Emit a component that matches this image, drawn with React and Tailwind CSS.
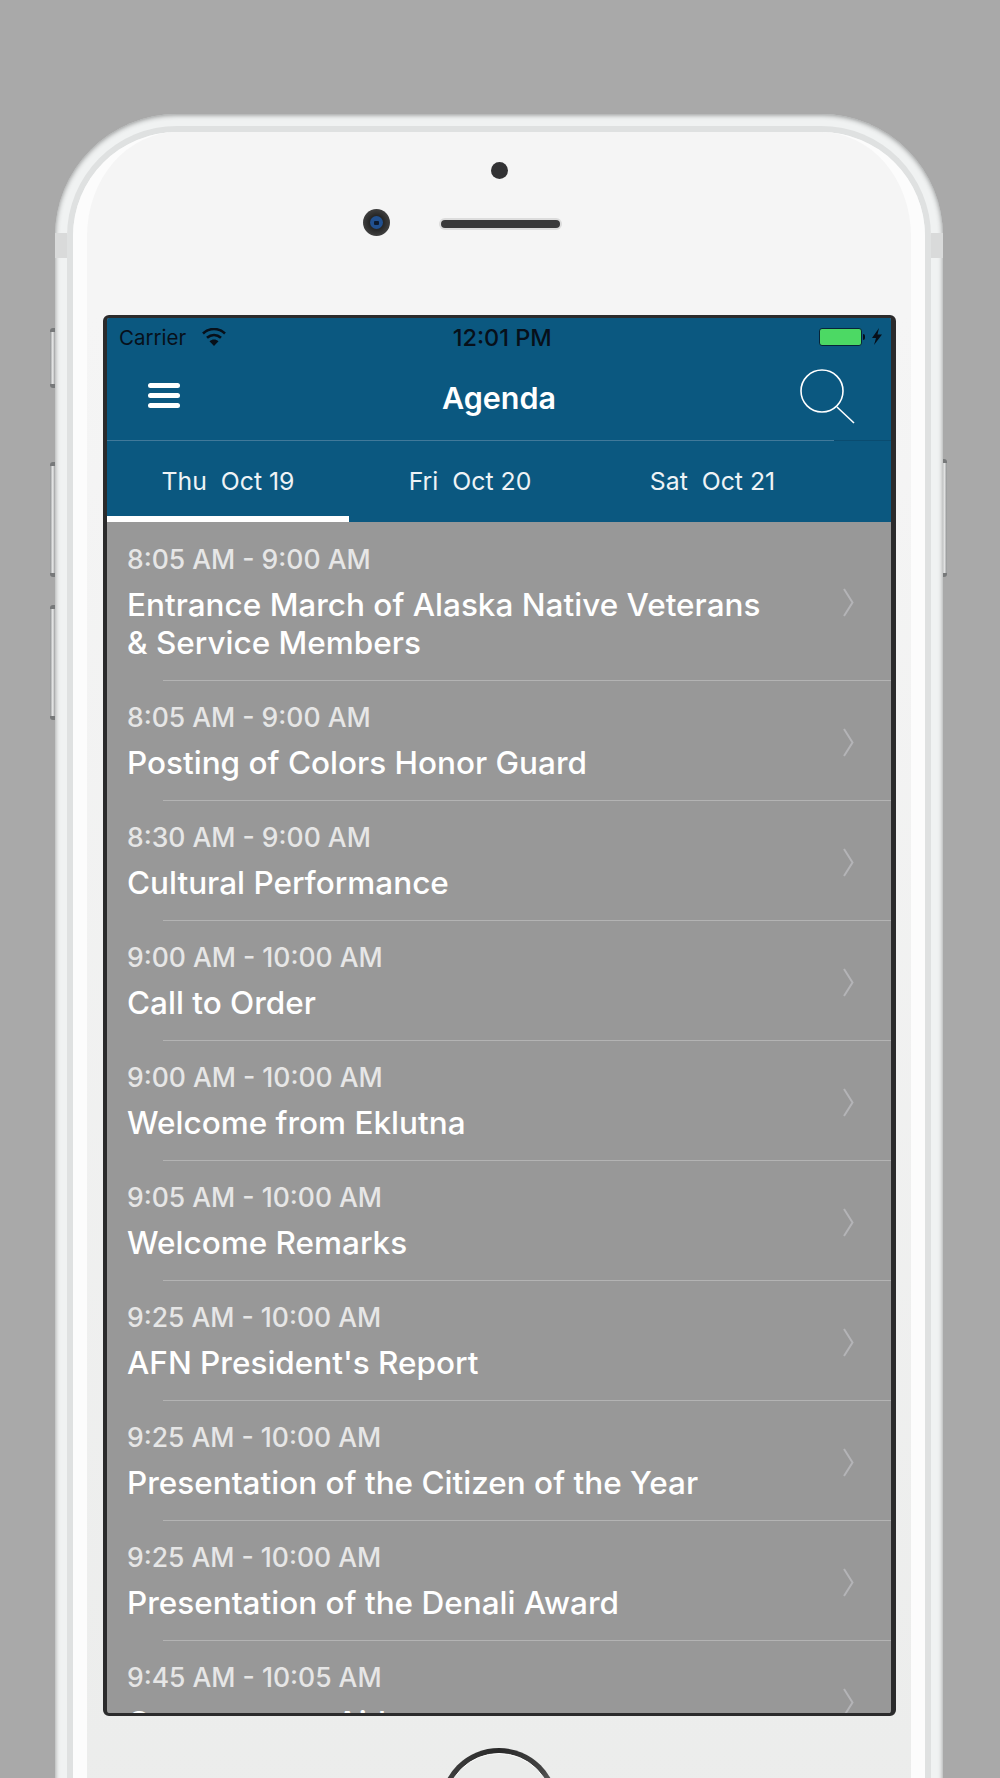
const rows = [
  { time: "8:05 AM - 9:00 AM", title: "Entrance March of Alaska Native Veterans & Service Members", tall: true },
  { time: "8:05 AM - 9:00 AM", title: "Posting of Colors Honor Guard" },
  { time: "8:30 AM - 9:00 AM", title: "Cultural Performance" },
  { time: "9:00 AM - 10:00 AM", title: "Call to Order" },
  { time: "9:00 AM - 10:00 AM", title: "Welcome from Eklutna" },
  { time: "9:05 AM - 10:00 AM", title: "Welcome Remarks" },
  { time: "9:25 AM - 10:00 AM", title: "AFN President's Report" },
  { time: "9:25 AM - 10:00 AM", title: "Presentation of the Citizen of the Year" },
  { time: "9:25 AM - 10:00 AM", title: "Presentation of the Denali Award" },
  { time: "9:45 AM - 10:05 AM", title: "Comments to Aid" },
];

function SideButton({ className }) {
  return (
    <div className={`absolute w-[5px] rounded-l-[3px] border-y-4 border-[#77797a] bg-[linear-gradient(90deg,#8d8f90,#e9eaea_55%,#9c9d9e)] ${className}`} />
  );
}

function Row({ item }) {
  return (
    <div className={`flex flex-col ${item.tall ? "h-[159px]" : "h-[120px]"}`}>
      <div className="flex flex-1 items-center">
        <div className="w-[670px] pt-[3px] pl-5">
          <div className="text-[26.5px] leading-[30px] font-medium text-[#e6e6e6]">{item.time}</div>
          <div className="mt-[12px] text-[31.5px] leading-[38px] font-medium text-white">{item.title}</div>
        </div>
        <svg className="mt-[3px] ml-[66px] h-[29px] w-[11px]" viewBox="0 0 11 29" fill="none" stroke="#b4b4b7" strokeWidth="2">
          <path d="M1 1 9.500 14.500 1 28" />
        </svg>
      </div>
      <div className="ml-14 h-px shrink-0 bg-[#b3b3b3]" />
    </div>
  );
}

export default function App() {
  return (
    <div className="h-[1778px] w-[1000px] overflow-hidden bg-[#a9a9a9] pt-[114px] font-['Inter','Liberation_Sans',sans-serif]">
      <div className="relative ml-[55px] w-[888px]">
        <SideButton className="left-[-5px] top-[214px] h-[60px]" />
        <SideButton className="left-[-5px] top-[348px] h-[115px]" />
        <SideButton className="left-[-5px] top-[491px] h-[115px]" />
        <SideButton className="right-[-4px] top-[345px] h-[118px] rotate-180" />

        {/* metal edge */}
        <div className="relative h-[1800px] rounded-t-[122px] bg-[#f0f2f2] px-[12px] pt-[12px] shadow-[inset_0_1px_5px_#8f9191]">
          <div className="absolute left-0 top-[119px] h-[25px] w-[12px] bg-[#d9dada]" />
          <div className="absolute right-0 top-[119px] h-[25px] w-[12px] bg-[#d9dada]" />
          <div className="h-full rounded-t-[110px] border-x-[6px] border-t-[6px] border-[#dfe1e1]">
            <div className="h-full rounded-t-[104px] border-x-[14px] border-t-0 border-[#fcfcfc] bg-[linear-gradient(180deg,#f5f5f5,#f5f5f5_180px,#ebeceb)] px-[16px]">
              <div className="flex justify-center pt-[30px]">
                <div className="h-[17px] w-[17px] rounded-full bg-[#323234]" />
              </div>
              <div className="mt-[30px] flex items-center pl-[260px]">
                <div className="flex h-[27px] w-[27px] items-center justify-center rounded-full bg-[radial-gradient(circle,#222_30%,#555)]">
                  <div className="flex h-[13px] w-[13px] items-center justify-center rounded-full bg-[#21508f]">
                    <div className="h-[4px] w-[5px] rounded-[1px] bg-[#0d1a2e]" />
                  </div>
                </div>
                <div className="mt-[2px] ml-[51px] h-[8px] w-[119px] rounded-full bg-[#39393a] shadow-[0_0_0_2px_#dcdcdc]" />
              </div>

              {/* screen */}
              <div className="mt-[79px] h-[1401px] w-[793px] overflow-hidden rounded-[6px] border-y-[3px] border-r-[5px] border-l-4 border-[#2b2b2c] bg-[#989898]">
                <div className="bg-[#0b5880]">
                  <div className="flex h-[37px] items-center pr-[9px] pl-[12px] text-[20.5px] text-[#07101a]">
                    <span className="mt-[4px]">Carrier</span>
                    <svg className="ml-[16px] h-[18px] w-[24px]" viewBox="0 0 24 18">
                      <path d="M1 5.500C7.500-.5 16.500-.5 23 5.500" fill="none" stroke="#07101a" strokeWidth="2.6" />
                      <path d="M5 9.800c4.200-3.800 9.800-3.800 14 0" fill="none" stroke="#07101a" strokeWidth="2.600" />
                      <path d="M7.500 13.200c2.700-2.400 6.300-2.400 9 0L12 18z" fill="#07101a" />
                    </svg>
                    <span className="mt-[2px] ml-[224px] w-[104px] text-center text-[23.5px] font-medium whitespace-nowrap">12:01 PM</span>
                    <div className="ml-auto h-[18px] w-[43px] rounded-[3px] border border-[#07243a] bg-[#4cd964]" />
                    <div className="ml-[1px] h-[6px] w-[2px] rounded-r-full bg-[#07101a]" />
                    <svg className="ml-[7px] h-[17px] w-[10px]" viewBox="0 0 10 17">
                      <path d="M7 0 0 10h4l-2 7 8-10.500H5.500z" fill="#07101a" />
                    </svg>
                  </div>
                  <div className="relative flex h-[85px] items-center justify-center">
                    <div className="absolute left-[41px] top-[28px] flex w-[32px] flex-col gap-[5px]">
                      <div className="h-[5px] rounded-full bg-white" />
                      <div className="h-[5px] rounded-full bg-white" />
                      <div className="h-[5px] rounded-full bg-white" />
                    </div>
                    <span className="text-[30.5px] font-semibold text-white">Agenda</span>
                    <svg className="absolute left-[692px] top-[13px] h-[56px] w-[56px]" viewBox="0 0 56 56" fill="none" stroke="#fff" strokeWidth="1.6">
                      <circle cx="23" cy="23" r="21" />
                      <path d="M38 39 55 55" />
                    </svg>
                  </div>
                  <div className="flex">
                    <div className="h-px w-[727px] bg-[#41799a]" />
                    <div className="h-px flex-1 bg-[#0a4c70]" />
                  </div>
                  <div className="flex h-[81px] text-[24.8px] text-[#eef3f6]">
                    <div className="relative flex w-[242px] items-center justify-center">
                      Thu&nbsp; Oct 19
                      <div className="absolute inset-x-0 bottom-0 h-[6px] bg-white" />
                    </div>
                    <div className="flex w-[242px] items-center justify-center">Fri&nbsp; Oct 20</div>
                    <div className="flex w-[243px] items-center justify-center">Sat&nbsp; Oct 21</div>
                  </div>
                </div>
                {rows.map((item, i) => (
                  <Row key={i} item={item} />
                ))}
              </div>

              <div className="mt-[32px] ml-[337px] h-[118px] w-[118px] rounded-full bg-[conic-gradient(#2a2a2a_0deg,#444_50deg,#b5b5b5_110deg,#b5b5b5_220deg,#444_280deg,#2a2a2a_360deg)] p-[5px]">
                <div className="h-full w-full rounded-full border border-white bg-[#ebeceb]" />
              </div>
            </div>
          </div>
        </div>
      </div>
    </div>
  );
}
